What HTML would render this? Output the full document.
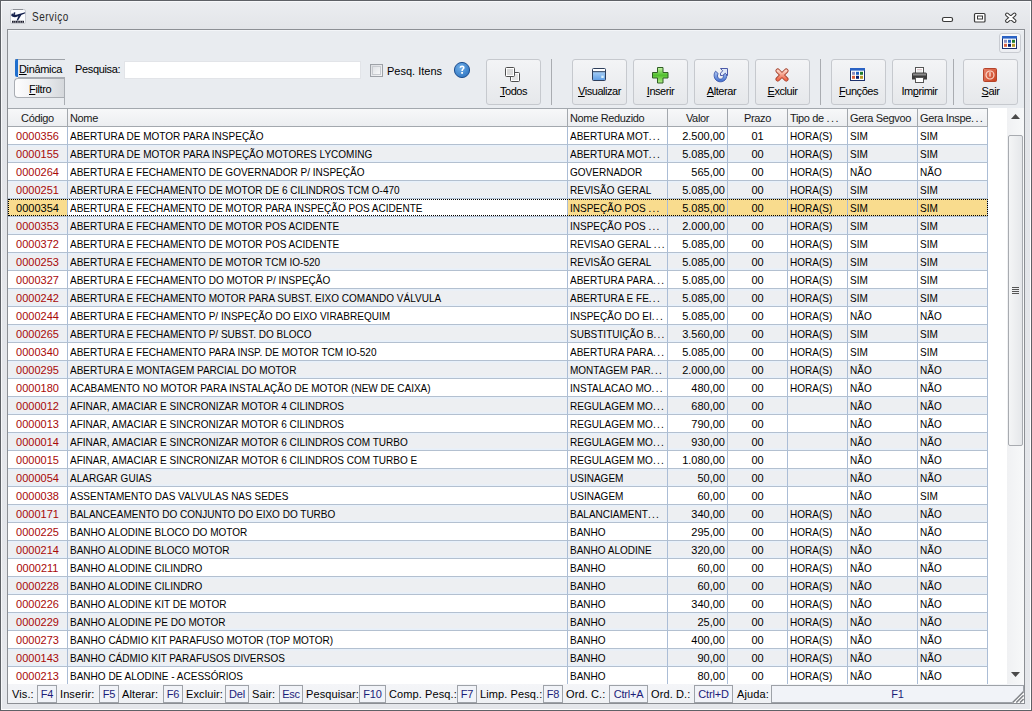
<!DOCTYPE html>
<html><head><meta charset="utf-8"><style>
*{box-sizing:border-box;margin:0;padding:0}
html,body{width:1032px;height:711px;overflow:hidden}
body{position:relative;background:linear-gradient(#eceef1 0,#e3e5e9 28px,#e5e7eb 100%);font-family:"Liberation Sans",sans-serif;font-size:11px;color:#000}
.abs{position:absolute}
#win{position:absolute;left:0;top:0;width:1032px;height:711px;border:1px solid #5e6166}
#title{position:absolute;left:32px;top:10px;font-size:12px;color:#2a2a2a;letter-spacing:0.6px;transform:scaleX(.83);transform-origin:0 0}
#panel{position:absolute;left:7px;top:29px;width:1018px;height:675px;border:1px solid #8c8f94;background:#e9ecf0}
.btn{position:absolute;top:59px;width:55px;height:46px;border:1px solid #c6c9ce;border-radius:3px;background:linear-gradient(#f3f4f6,#e6e8eb);}
.btn .lbl{position:absolute;left:0;right:0;top:25px;text-align:center;font-size:11px;letter-spacing:-0.45px}
.btn .ic{position:absolute}
.sep{position:absolute;top:59px;width:1px;height:46px;background:#a9acb1}
u{text-decoration:underline;text-underline-offset:1px;text-decoration-thickness:1px}
.ghead{position:absolute;left:0;top:108px;width:1032px;height:18px}
.hc{position:absolute;top:0;height:19px;border:1px solid #a3a8ae;border-left:none;background:linear-gradient(#f7f8f9,#eceef1);line-height:18px;padding:0 2px;white-space:nowrap;overflow:hidden;color:#1a1a1a}
.row{position:absolute;left:0;width:1032px;height:18px}
.cell{position:absolute;top:0;height:18px;border-right:1px solid #abbdd6;border-bottom:1px solid #b3c0d0;background:#fff;line-height:18px;padding:0 2px;white-space:nowrap;overflow:hidden}
.alt .cell{background:linear-gradient(#e7f0fa 0,#e7f0fa 1px,#edeff2 2px,#edeff2 15px,#e7f0fa 16px)}
.sel .cell{background:#f9dc8e}
.sel .cell.foc{background:#fff}
.cell.cod{color:#a80808}
.sel .cell.cod{color:#000}
.al{text-align:left}.ar{text-align:right}.ac{text-align:center}
.lbl2{font-size:11px;letter-spacing:-0.35px;color:#000;white-space:nowrap}
.st{position:absolute;top:688px;font-size:11px;letter-spacing:0.1px;color:#000;white-space:nowrap}
.fk{position:absolute;top:685px;height:18px;border:1px solid #9ea2a8;background:#f1f3f8;color:#1c1c78;text-align:center;line-height:16px;font-size:11px;letter-spacing:-0.2px}
.cell{line-height:19px}
.k0{letter-spacing:0}
.cell span{display:inline-block}
.k1 span,.k2 span,.k5 span,.k6 span,.k7 span{transform:scaleX(.91);transform-origin:0 0;word-spacing:0}
.k3{letter-spacing:0}
.k4{letter-spacing:0}
.hc{letter-spacing:-0.35px}
.selbox{position:absolute;left:8px;top:0;width:980px;height:17px;border:1px dotted #000}

.el{font-style:normal;letter-spacing:1.4px}

</style></head><body>
<div id="win"></div>
<div class="abs" style="left:1030px;top:1px;width:1px;height:709px;background:#fff"></div>
<div class="abs" style="left:1px;top:709px;width:1030px;height:1px;background:#fff"></div>
<div class="abs" style="left:1px;top:1px;width:1030px;height:1px;background:#f7f8fa"></div>
<div class="abs" style="left:1px;top:1px;width:1px;height:709px;background:#f7f8fa"></div>
<!-- app icon -->
<svg class="abs" style="left:9px;top:8px" width="18" height="17" viewBox="0 0 18 17">
<rect x="1.5" y="1.5" width="15" height="14" rx="1.5" fill="#fbfcfe" stroke="#c9ccd2"/>
<line x1="4" y1="1.5" x2="14" y2="1.5" stroke="#8e9197"/>
<path d="M2.2 7.6 C3.5 9.2 6 9.6 8.6 8.6 L15.8 5.6 C16.6 5.2 16.4 4.2 15.4 4.4 L8.2 6.4 C6.2 7 4.6 6.8 3.6 5.4 L2.6 5.8 Z" fill="#13204d"/>
<path d="M9.6 7.4 L12.6 6.6 L9 12.6 L7.6 12.6 Z" fill="#13204d"/>
<path d="M4 6.6 L5 4.2 L6.4 4.4 L5.8 7 Z" fill="#13204d"/>
<rect x="3" y="12.8" width="12" height="2" fill="#1c1c2c"/>
<g fill="#fbfcfe" opacity=".8"><rect x="4.6" y="12.8" width=".5" height="2"/><rect x="6.3" y="12.8" width=".5" height="2"/><rect x="8" y="12.8" width=".5" height="2"/><rect x="9.7" y="12.8" width=".5" height="2"/><rect x="11.4" y="12.8" width=".5" height="2"/><rect x="13.1" y="12.8" width=".5" height="2"/></g>
</svg>
<div id="title">Serviço</div>
<!-- window controls -->
<svg class="abs" style="left:938px;top:10px" width="84" height="16" viewBox="0 0 84 16">
<rect x="4.5" y="7.5" width="10" height="4" rx="1.5" fill="#fff" stroke="#3a3a3a" stroke-width="1.2"/>
<rect x="36.5" y="3.5" width="10.5" height="8.5" rx="1" fill="#fff" stroke="#3a3a3a" stroke-width="1.2"/>
<rect x="39.5" y="6" width="5" height="3" fill="#fff" stroke="#3a3a3a" stroke-width="1"/>
<path d="M69 4.5 L76.5 11 M76.5 4.5 L69 11" stroke="#3a3a3a" stroke-width="4" stroke-linecap="round"/>
<path d="M69 4.5 L76.5 11 M76.5 4.5 L69 11" stroke="#fff" stroke-width="1.8" stroke-linecap="round"/>
</svg>
<div id="panel"></div>
<div class="abs" style="left:8px;top:30px;width:1016px;height:1px;background:#f3f5f8"></div>
<!-- grid button top right -->
<div class="abs" style="left:999px;top:33px;width:22px;height:20px;border:1px solid #c9ccd2;border-radius:3px;background:linear-gradient(#f7f8fa,#eceef2)"></div>
<svg class="abs" style="left:1002px;top:36px" width="15" height="13" viewBox="0 0 15 13">
<rect x="0.5" y="0.5" width="14" height="12" fill="#fff" stroke="#1b2f6b"/>
<rect x="0" y="0" width="15" height="2.6" fill="#2a62c4"/>
<rect x="2" y="3.8" width="3" height="3" fill="#8c8fc0"/><rect x="6" y="3.8" width="3" height="3" fill="#1f5fc2"/><rect x="10" y="3.8" width="3" height="3" fill="#1f7a2e"/>
<rect x="2" y="7.8" width="3" height="3" fill="#d9603f"/><rect x="6" y="7.8" width="3" height="3" fill="#0b1e6e"/><rect x="10" y="7.8" width="3" height="3" fill="#b89a2a"/>
</svg>
<!-- tabs -->
<div class="abs" style="left:15px;top:59px;width:50px;height:1px;background:#9fa3a9"></div>
<div class="abs" style="left:15px;top:59px;width:3px;height:18px;background:#1f6fce;border-radius:2px 0 0 2px"></div>
<div class="abs" style="left:18px;top:77px;width:47px;height:1px;background:#a9adb3"></div>
<div class="abs lbl2" style="left:19px;top:63px"><u>D</u>inâmica</div>
<div class="abs" style="left:14px;top:78px;width:51px;height:20px;border:1px solid #a9adb3;border-right:none;border-radius:4px 0 0 4px;background:linear-gradient(90deg,#fdfdfe,#e8eaed 60%,#d4d7db)"></div>
<div class="abs lbl2" style="left:29px;top:83px"><u>F</u>iltro</div>
<div class="abs" style="left:64px;top:78px;width:1px;height:27px;background:#a9adb3"></div>
<!-- search -->
<div class="abs lbl2" style="left:75px;top:63px">Pesquisa:</div>
<div class="abs" style="left:124px;top:61px;width:237px;height:18px;background:#fff;border:1px solid #e2e4e8"></div>
<div class="abs" style="left:370px;top:64px;width:13px;height:13px;border:1px solid #9da1a7;background:linear-gradient(135deg,#dcdee2,#f4f5f7)"></div>
<div class="abs" style="left:372px;top:66px;width:9px;height:9px;border:1px solid #c8cbd0;background:linear-gradient(135deg,#e0e2e6,#f7f8f9)"></div>
<div class="abs lbl2" style="left:387px;top:65px;letter-spacing:0">Pesq. Itens</div>
<svg class="abs" style="left:453px;top:61px" width="18" height="18" viewBox="0 0 18 18">
<defs><radialGradient id="hg" cx="40%" cy="35%" r="70%"><stop offset="0" stop-color="#6fb0ea"/><stop offset="1" stop-color="#2f74c0"/></radialGradient></defs>
<circle cx="9" cy="9" r="7.6" fill="url(#hg)" stroke="#1f4f8f" stroke-width="1"/>
<path d="M6.6 6.8 C6.6 5.3 7.7 4.6 9.1 4.6 C10.6 4.6 11.6 5.4 11.6 6.7 C11.6 8.2 9.9 8.4 9.9 10 L8.3 10 C8.3 7.9 9.9 7.7 9.9 6.8 C9.9 6.2 9.6 5.9 9.1 5.9 C8.5 5.9 8.2 6.3 8.2 6.8 Z" fill="#fff"/>
<rect x="8.2" y="11" width="1.8" height="1.8" fill="#fff"/>
</svg>
<!-- toolbar buttons -->
<div class="btn" style="left:486px"><div class="lbl"><u>T</u>odos</div>
<svg class="ic" style="left:18px;top:7px" width="16" height="16" viewBox="0 0 16 16">
<rect x="5.5" y="5.5" width="9" height="9" rx="1" fill="#fff" stroke="#4e4e4e"/><rect x="7" y="7" width="6" height="6" fill="#e3e3e3"/>
<rect x="0.5" y="0.5" width="9" height="9" rx="1" fill="#fff" stroke="#4e4e4e"/><rect x="2" y="2" width="6" height="6" fill="#d9d9d9"/>
</svg></div>
<div class="sep" style="left:551px"></div>
<div class="btn" style="left:572px"><div class="lbl"><u>V</u>isualizar</div>
<svg class="ic" style="left:19px;top:8px" width="14" height="13" viewBox="0 0 14 13">
<defs><linearGradient id="vg" x1="0" y1="0" x2="0" y2="1"><stop offset="0" stop-color="#bfe0fc"/><stop offset="1" stop-color="#5f9de4"/></linearGradient></defs>
<rect x="0.5" y="0.5" width="13" height="12" rx="1" fill="url(#vg)" stroke="#2e3f5c"/>
<rect x="1" y="1" width="12" height="2.4" fill="#fff"/><line x1="0.5" y1="3.7" x2="13.5" y2="3.7" stroke="#2e3f5c"/>
<rect x="9.3" y="7.6" width="2.4" height="2.4" fill="#d8f2ff"/>
</svg></div>
<div class="btn" style="left:633px"><div class="lbl"><u>I</u>nserir</div>
<svg class="ic" style="left:18px;top:7px" width="17" height="17" viewBox="0 0 17 17">
<defs><linearGradient id="ig" x1="0" y1="0" x2="0" y2="1"><stop offset="0" stop-color="#c8f5a8"/><stop offset=".5" stop-color="#4fbf2c"/><stop offset="1" stop-color="#b6ee8c"/></linearGradient></defs>
<path d="M5.5 0.5 H11 V5.5 H16 V11 H11 V16 H5.5 V11 H0.5 V5.5 H5.5 Z" fill="url(#ig)" stroke="#2f5e24" stroke-linejoin="round"/>
</svg></div>
<div class="btn" style="left:694px"><div class="lbl"><u>A</u>lterar</div>
<svg class="ic" style="left:18px;top:8px" width="16" height="16" viewBox="0 0 16 16">
<defs><linearGradient id="ag" x1="0" y1="0" x2="0" y2="1"><stop offset="0" stop-color="#b4ccf2"/><stop offset="1" stop-color="#3d6cd0"/></linearGradient></defs>
<path d="M2.6 3.2 C0.6 5.4 0.6 9.6 3 12 C5.4 14.4 9.6 14.4 12 12 C14 10 14.2 6.8 12.8 4.6 L10 6.2 C10.8 7.6 10.6 9.2 9.6 10.2 C8.4 11.4 6.6 11.4 5.4 10.2 C4.2 9 4.2 7 5.2 5.6 Z" fill="url(#ag)" stroke="#3a55a8" stroke-width=".9" stroke-linejoin="round"/>
<path d="M7.5 0.5 L14.5 0.5 L14.5 7.5 L12.3 5.3 L9.7 7.5 L7.5 7.5 L7.5 5.2 L9.7 2.8 Z" fill="#dfe8f8" stroke="#3a4aa0" stroke-width=".9" stroke-linejoin="round"/>
</svg></div>
<div class="btn" style="left:755px"><div class="lbl"><u>E</u>xcluir</div>
<svg class="ic" style="left:19px;top:8px" width="14" height="14" viewBox="0 0 14 14">
<defs><linearGradient id="xg" x1="0" y1="0" x2="0" y2="1"><stop offset="0" stop-color="#fdd3c4"/><stop offset="1" stop-color="#ef6b4e"/></linearGradient></defs>
<path d="M2.8 2.8 L11.2 11.2 M11.2 2.8 L2.8 11.2" stroke="#a5402b" stroke-width="4.6" stroke-linecap="round"/>
<path d="M2.8 2.8 L11.2 11.2 M11.2 2.8 L2.8 11.2" stroke="url(#xg)" stroke-width="2.9" stroke-linecap="round"/>
</svg></div>
<div class="sep" style="left:820px"></div>
<div class="btn" style="left:831px"><div class="lbl"><u>F</u>unções</div>
<svg class="ic" style="left:18px;top:8px" width="15" height="13" viewBox="0 0 15 13">
<rect x="0.5" y="0.5" width="14" height="12" fill="#fff" stroke="#1b2f6b"/>
<rect x="0" y="0" width="15" height="2.6" fill="#2a62c4"/>
<rect x="2" y="3.8" width="3" height="3" fill="#8c8fc0"/><rect x="6" y="3.8" width="3" height="3" fill="#1f5fc2"/><rect x="10" y="3.8" width="3" height="3" fill="#1f7a2e"/>
<rect x="2" y="7.8" width="3" height="3" fill="#d9603f"/><rect x="6" y="7.8" width="3" height="3" fill="#0b1e6e"/><rect x="10" y="7.8" width="3" height="3" fill="#b89a2a"/>
</svg></div>
<div class="btn" style="left:892px"><div class="lbl">Im<u>p</u>rimir</div>
<svg class="ic" style="left:18px;top:7px" width="17" height="16" viewBox="0 0 17 16">
<rect x="4.5" y="0.5" width="8" height="6" fill="#fff" stroke="#555"/>
<line x1="6" y1="2.5" x2="11" y2="2.5" stroke="#c9a0a8" stroke-width=".6"/><line x1="6" y1="4" x2="11" y2="4" stroke="#bbb" stroke-width=".6"/>
<path d="M1 7 Q1 5.5 2.5 5.5 H14.5 Q16 5.5 16 7 V12.5 H1 Z" fill="#3c3c3c"/>
<rect x="2" y="6.5" width="13" height="2" fill="#8a8a8a"/>
<rect x="4.5" y="10.5" width="8" height="5" fill="#fff" stroke="#555"/>
</svg></div>
<div class="sep" style="left:953px"></div>
<div class="btn" style="left:963px"><div class="lbl"><u>S</u>air</div>
<svg class="ic" style="left:19px;top:8px" width="14" height="14" viewBox="0 0 14 14">
<defs><linearGradient id="sg" x1="0" y1="0" x2="1" y2="1"><stop offset="0" stop-color="#e8826a"/><stop offset="1" stop-color="#c8401e"/></linearGradient></defs>
<rect x="0.5" y="0.5" width="13" height="13" rx="1" fill="url(#sg)" stroke="#b4432a"/>
<circle cx="7" cy="7" r="4" fill="none" stroke="#fbd6c8" stroke-width="1.2"/>
<rect x="6.3" y="4.2" width="1.4" height="4.4" fill="#fbd6c8"/>
</svg></div>
<!-- grid area -->
<div class="abs" style="left:8px;top:108px;width:999px;height:577px;background:#fff"></div>
<div class="ghead">
<div class="hc ac" style="left:8px;width:60px">Código</div>
<div class="hc al" style="left:68px;width:500px">Nome</div>
<div class="hc al" style="left:568px;width:100px">Nome Reduzido</div>
<div class="hc ac" style="left:668px;width:60px">Valor</div>
<div class="hc ac" style="left:728px;width:60px">Prazo</div>
<div class="hc al" style="left:788px;width:60px">Tipo de <i class="el">...</i></div>
<div class="hc al" style="left:848px;width:70px">Gera Segvoo</div>
<div class="hc al" style="left:918px;width:70px">Gera Inspe<i class="el">...</i></div>
</div>
<div class="row" style="top:127px">
<div class="cell k0 ac cod" style="left:8px;width:60px"><span>0000356</span></div>
<div class="cell k1 al" style="left:68px;width:500px"><span>ABERTURA DE MOTOR PARA INSPEÇÃO</span></div>
<div class="cell k2 al" style="left:568px;width:100px"><span>ABERTURA MOT<i class="el">...</i></span></div>
<div class="cell k3 ar" style="left:668px;width:60px"><span>2.500,00</span></div>
<div class="cell k4 ac" style="left:728px;width:60px"><span>01</span></div>
<div class="cell k5 al" style="left:788px;width:60px"><span>HORA(S)</span></div>
<div class="cell k6 al" style="left:848px;width:70px"><span>SIM</span></div>
<div class="cell k7 al" style="left:918px;width:70px"><span>SIM</span></div>
</div>
<div class="row alt" style="top:145px">
<div class="cell k0 ac cod" style="left:8px;width:60px"><span>0000155</span></div>
<div class="cell k1 al" style="left:68px;width:500px"><span>ABERTURA DE MOTOR PARA INSPEÇÃO MOTORES LYCOMING</span></div>
<div class="cell k2 al" style="left:568px;width:100px"><span>ABERTURA MOT<i class="el">...</i></span></div>
<div class="cell k3 ar" style="left:668px;width:60px"><span>5.085,00</span></div>
<div class="cell k4 ac" style="left:728px;width:60px"><span>00</span></div>
<div class="cell k5 al" style="left:788px;width:60px"><span>HORA(S)</span></div>
<div class="cell k6 al" style="left:848px;width:70px"><span>SIM</span></div>
<div class="cell k7 al" style="left:918px;width:70px"><span>SIM</span></div>
</div>
<div class="row" style="top:163px">
<div class="cell k0 ac cod" style="left:8px;width:60px"><span>0000264</span></div>
<div class="cell k1 al" style="left:68px;width:500px"><span>ABERTURA E FECHAMENTO DE GOVERNADOR P/ INSPEÇÃO</span></div>
<div class="cell k2 al" style="left:568px;width:100px"><span>GOVERNADOR</span></div>
<div class="cell k3 ar" style="left:668px;width:60px"><span>565,00</span></div>
<div class="cell k4 ac" style="left:728px;width:60px"><span>00</span></div>
<div class="cell k5 al" style="left:788px;width:60px"><span>HORA(S)</span></div>
<div class="cell k6 al" style="left:848px;width:70px"><span>NÃO</span></div>
<div class="cell k7 al" style="left:918px;width:70px"><span>NÃO</span></div>
</div>
<div class="row alt" style="top:181px">
<div class="cell k0 ac cod" style="left:8px;width:60px"><span>0000251</span></div>
<div class="cell k1 al" style="left:68px;width:500px"><span>ABERTURA E FECHAMENTO DE MOTOR DE 6 CILINDROS TCM O-470</span></div>
<div class="cell k2 al" style="left:568px;width:100px"><span>REVISÃO GERAL</span></div>
<div class="cell k3 ar" style="left:668px;width:60px"><span>5.085,00</span></div>
<div class="cell k4 ac" style="left:728px;width:60px"><span>00</span></div>
<div class="cell k5 al" style="left:788px;width:60px"><span>HORA(S)</span></div>
<div class="cell k6 al" style="left:848px;width:70px"><span>SIM</span></div>
<div class="cell k7 al" style="left:918px;width:70px"><span>SIM</span></div>
</div>
<div class="row sel" style="top:199px">
<div class="cell k0 ac cod" style="left:8px;width:60px"><span>0000354</span></div>
<div class="cell k1 al foc" style="left:68px;width:500px"><span>ABERTURA E FECHAMENTO DE MOTOR PARA INSPEÇÃO POS ACIDENTE</span></div>
<div class="cell k2 al" style="left:568px;width:100px"><span>INSPEÇÃO POS <i class="el">...</i></span></div>
<div class="cell k3 ar" style="left:668px;width:60px"><span>5.085,00</span></div>
<div class="cell k4 ac" style="left:728px;width:60px"><span>00</span></div>
<div class="cell k5 al" style="left:788px;width:60px"><span>HORA(S)</span></div>
<div class="cell k6 al" style="left:848px;width:70px"><span>SIM</span></div>
<div class="cell k7 al" style="left:918px;width:70px"><span>SIM</span></div>
<div class="selbox"></div>
</div>
<div class="row alt" style="top:217px">
<div class="cell k0 ac cod" style="left:8px;width:60px"><span>0000353</span></div>
<div class="cell k1 al" style="left:68px;width:500px"><span>ABERTURA E FECHAMENTO DE MOTOR POS ACIDENTE</span></div>
<div class="cell k2 al" style="left:568px;width:100px"><span>INSPEÇÃO POS <i class="el">...</i></span></div>
<div class="cell k3 ar" style="left:668px;width:60px"><span>2.000,00</span></div>
<div class="cell k4 ac" style="left:728px;width:60px"><span>00</span></div>
<div class="cell k5 al" style="left:788px;width:60px"><span>HORA(S)</span></div>
<div class="cell k6 al" style="left:848px;width:70px"><span>SIM</span></div>
<div class="cell k7 al" style="left:918px;width:70px"><span>SIM</span></div>
</div>
<div class="row" style="top:235px">
<div class="cell k0 ac cod" style="left:8px;width:60px"><span>0000372</span></div>
<div class="cell k1 al" style="left:68px;width:500px"><span>ABERTURA E FECHAMENTO DE MOTOR POS ACIDENTE</span></div>
<div class="cell k2 al" style="left:568px;width:100px"><span>REVISAO GERAL <i class="el">...</i></span></div>
<div class="cell k3 ar" style="left:668px;width:60px"><span>5.085,00</span></div>
<div class="cell k4 ac" style="left:728px;width:60px"><span>00</span></div>
<div class="cell k5 al" style="left:788px;width:60px"><span>HORA(S)</span></div>
<div class="cell k6 al" style="left:848px;width:70px"><span>SIM</span></div>
<div class="cell k7 al" style="left:918px;width:70px"><span>SIM</span></div>
</div>
<div class="row alt" style="top:253px">
<div class="cell k0 ac cod" style="left:8px;width:60px"><span>0000253</span></div>
<div class="cell k1 al" style="left:68px;width:500px"><span>ABERTURA E FECHAMENTO DE MOTOR TCM IO-520</span></div>
<div class="cell k2 al" style="left:568px;width:100px"><span>REVISÃO GERAL</span></div>
<div class="cell k3 ar" style="left:668px;width:60px"><span>5.085,00</span></div>
<div class="cell k4 ac" style="left:728px;width:60px"><span>00</span></div>
<div class="cell k5 al" style="left:788px;width:60px"><span>HORA(S)</span></div>
<div class="cell k6 al" style="left:848px;width:70px"><span>SIM</span></div>
<div class="cell k7 al" style="left:918px;width:70px"><span>SIM</span></div>
</div>
<div class="row" style="top:271px">
<div class="cell k0 ac cod" style="left:8px;width:60px"><span>0000327</span></div>
<div class="cell k1 al" style="left:68px;width:500px"><span>ABERTURA E FECHAMENTO DO MOTOR P/ INSPEÇÃO</span></div>
<div class="cell k2 al" style="left:568px;width:100px"><span>ABERTURA PARA<i class="el">...</i></span></div>
<div class="cell k3 ar" style="left:668px;width:60px"><span>5.085,00</span></div>
<div class="cell k4 ac" style="left:728px;width:60px"><span>00</span></div>
<div class="cell k5 al" style="left:788px;width:60px"><span>HORA(S)</span></div>
<div class="cell k6 al" style="left:848px;width:70px"><span>SIM</span></div>
<div class="cell k7 al" style="left:918px;width:70px"><span>SIM</span></div>
</div>
<div class="row alt" style="top:289px">
<div class="cell k0 ac cod" style="left:8px;width:60px"><span>0000242</span></div>
<div class="cell k1 al" style="left:68px;width:500px"><span>ABERTURA E FECHAMENTO MOTOR PARA SUBST. EIXO COMANDO VÁLVULA</span></div>
<div class="cell k2 al" style="left:568px;width:100px"><span>ABERTURA E FE<i class="el">...</i></span></div>
<div class="cell k3 ar" style="left:668px;width:60px"><span>5.085,00</span></div>
<div class="cell k4 ac" style="left:728px;width:60px"><span>00</span></div>
<div class="cell k5 al" style="left:788px;width:60px"><span>HORA(S)</span></div>
<div class="cell k6 al" style="left:848px;width:70px"><span>SIM</span></div>
<div class="cell k7 al" style="left:918px;width:70px"><span>SIM</span></div>
</div>
<div class="row" style="top:307px">
<div class="cell k0 ac cod" style="left:8px;width:60px"><span>0000244</span></div>
<div class="cell k1 al" style="left:68px;width:500px"><span>ABERTURA E FECHAMENTO P/ INSPEÇÃO DO EIXO VIRABREQUIM</span></div>
<div class="cell k2 al" style="left:568px;width:100px"><span>INSPEÇÃO DO EI<i class="el">...</i></span></div>
<div class="cell k3 ar" style="left:668px;width:60px"><span>5.085,00</span></div>
<div class="cell k4 ac" style="left:728px;width:60px"><span>00</span></div>
<div class="cell k5 al" style="left:788px;width:60px"><span>HORA(S)</span></div>
<div class="cell k6 al" style="left:848px;width:70px"><span>NÃO</span></div>
<div class="cell k7 al" style="left:918px;width:70px"><span>NÃO</span></div>
</div>
<div class="row alt" style="top:325px">
<div class="cell k0 ac cod" style="left:8px;width:60px"><span>0000265</span></div>
<div class="cell k1 al" style="left:68px;width:500px"><span>ABERTURA E FECHAMENTO P/ SUBST. DO BLOCO</span></div>
<div class="cell k2 al" style="left:568px;width:100px"><span>SUBSTITUIÇÃO B<i class="el">...</i></span></div>
<div class="cell k3 ar" style="left:668px;width:60px"><span>3.560,00</span></div>
<div class="cell k4 ac" style="left:728px;width:60px"><span>00</span></div>
<div class="cell k5 al" style="left:788px;width:60px"><span>HORA(S)</span></div>
<div class="cell k6 al" style="left:848px;width:70px"><span>SIM</span></div>
<div class="cell k7 al" style="left:918px;width:70px"><span>SIM</span></div>
</div>
<div class="row" style="top:343px">
<div class="cell k0 ac cod" style="left:8px;width:60px"><span>0000340</span></div>
<div class="cell k1 al" style="left:68px;width:500px"><span>ABERTURA E FECHAMENTO PARA INSP. DE MOTOR TCM IO-520</span></div>
<div class="cell k2 al" style="left:568px;width:100px"><span>ABERTURA PARA<i class="el">...</i></span></div>
<div class="cell k3 ar" style="left:668px;width:60px"><span>5.085,00</span></div>
<div class="cell k4 ac" style="left:728px;width:60px"><span>00</span></div>
<div class="cell k5 al" style="left:788px;width:60px"><span>HORA(S)</span></div>
<div class="cell k6 al" style="left:848px;width:70px"><span>SIM</span></div>
<div class="cell k7 al" style="left:918px;width:70px"><span>SIM</span></div>
</div>
<div class="row alt" style="top:361px">
<div class="cell k0 ac cod" style="left:8px;width:60px"><span>0000295</span></div>
<div class="cell k1 al" style="left:68px;width:500px"><span>ABERTURA E MONTAGEM PARCIAL DO MOTOR</span></div>
<div class="cell k2 al" style="left:568px;width:100px"><span>MONTAGEM PAR<i class="el">...</i></span></div>
<div class="cell k3 ar" style="left:668px;width:60px"><span>2.000,00</span></div>
<div class="cell k4 ac" style="left:728px;width:60px"><span>00</span></div>
<div class="cell k5 al" style="left:788px;width:60px"><span>HORA(S)</span></div>
<div class="cell k6 al" style="left:848px;width:70px"><span>NÃO</span></div>
<div class="cell k7 al" style="left:918px;width:70px"><span>NÃO</span></div>
</div>
<div class="row" style="top:379px">
<div class="cell k0 ac cod" style="left:8px;width:60px"><span>0000180</span></div>
<div class="cell k1 al" style="left:68px;width:500px"><span>ACABAMENTO NO MOTOR PARA INSTALAÇÃO DE MOTOR (NEW DE CAIXA)</span></div>
<div class="cell k2 al" style="left:568px;width:100px"><span>INSTALACAO MO<i class="el">...</i></span></div>
<div class="cell k3 ar" style="left:668px;width:60px"><span>480,00</span></div>
<div class="cell k4 ac" style="left:728px;width:60px"><span>00</span></div>
<div class="cell k5 al" style="left:788px;width:60px"><span>HORA(S)</span></div>
<div class="cell k6 al" style="left:848px;width:70px"><span>NÃO</span></div>
<div class="cell k7 al" style="left:918px;width:70px"><span>NÃO</span></div>
</div>
<div class="row alt" style="top:397px">
<div class="cell k0 ac cod" style="left:8px;width:60px"><span>0000012</span></div>
<div class="cell k1 al" style="left:68px;width:500px"><span>AFINAR, AMACIAR E SINCRONIZAR MOTOR 4 CILINDROS</span></div>
<div class="cell k2 al" style="left:568px;width:100px"><span>REGULAGEM MO<i class="el">...</i></span></div>
<div class="cell k3 ar" style="left:668px;width:60px"><span>680,00</span></div>
<div class="cell k4 ac" style="left:728px;width:60px"><span>00</span></div>
<div class="cell k5 al" style="left:788px;width:60px"><span></span></div>
<div class="cell k6 al" style="left:848px;width:70px"><span>NÃO</span></div>
<div class="cell k7 al" style="left:918px;width:70px"><span>NÃO</span></div>
</div>
<div class="row" style="top:415px">
<div class="cell k0 ac cod" style="left:8px;width:60px"><span>0000013</span></div>
<div class="cell k1 al" style="left:68px;width:500px"><span>AFINAR, AMACIAR E SINCRONIZAR MOTOR 6 CILINDROS</span></div>
<div class="cell k2 al" style="left:568px;width:100px"><span>REGULAGEM MO<i class="el">...</i></span></div>
<div class="cell k3 ar" style="left:668px;width:60px"><span>790,00</span></div>
<div class="cell k4 ac" style="left:728px;width:60px"><span>00</span></div>
<div class="cell k5 al" style="left:788px;width:60px"><span></span></div>
<div class="cell k6 al" style="left:848px;width:70px"><span>NÃO</span></div>
<div class="cell k7 al" style="left:918px;width:70px"><span>NÃO</span></div>
</div>
<div class="row alt" style="top:433px">
<div class="cell k0 ac cod" style="left:8px;width:60px"><span>0000014</span></div>
<div class="cell k1 al" style="left:68px;width:500px"><span>AFINAR, AMACIAR E SINCRONIZAR MOTOR 6 CILINDROS COM TURBO</span></div>
<div class="cell k2 al" style="left:568px;width:100px"><span>REGULAGEM MO<i class="el">...</i></span></div>
<div class="cell k3 ar" style="left:668px;width:60px"><span>930,00</span></div>
<div class="cell k4 ac" style="left:728px;width:60px"><span>00</span></div>
<div class="cell k5 al" style="left:788px;width:60px"><span></span></div>
<div class="cell k6 al" style="left:848px;width:70px"><span>NÃO</span></div>
<div class="cell k7 al" style="left:918px;width:70px"><span>NÃO</span></div>
</div>
<div class="row" style="top:451px">
<div class="cell k0 ac cod" style="left:8px;width:60px"><span>0000015</span></div>
<div class="cell k1 al" style="left:68px;width:500px"><span>AFINAR, AMACIAR E SINCRONIZAR MOTOR 6 CILINDROS COM TURBO E</span></div>
<div class="cell k2 al" style="left:568px;width:100px"><span>REGULAGEM MO<i class="el">...</i></span></div>
<div class="cell k3 ar" style="left:668px;width:60px"><span>1.080,00</span></div>
<div class="cell k4 ac" style="left:728px;width:60px"><span>00</span></div>
<div class="cell k5 al" style="left:788px;width:60px"><span></span></div>
<div class="cell k6 al" style="left:848px;width:70px"><span>NÃO</span></div>
<div class="cell k7 al" style="left:918px;width:70px"><span>NÃO</span></div>
</div>
<div class="row alt" style="top:469px">
<div class="cell k0 ac cod" style="left:8px;width:60px"><span>0000054</span></div>
<div class="cell k1 al" style="left:68px;width:500px"><span>ALARGAR GUIAS</span></div>
<div class="cell k2 al" style="left:568px;width:100px"><span>USINAGEM</span></div>
<div class="cell k3 ar" style="left:668px;width:60px"><span>50,00</span></div>
<div class="cell k4 ac" style="left:728px;width:60px"><span>00</span></div>
<div class="cell k5 al" style="left:788px;width:60px"><span></span></div>
<div class="cell k6 al" style="left:848px;width:70px"><span>NÃO</span></div>
<div class="cell k7 al" style="left:918px;width:70px"><span>NÃO</span></div>
</div>
<div class="row" style="top:487px">
<div class="cell k0 ac cod" style="left:8px;width:60px"><span>0000038</span></div>
<div class="cell k1 al" style="left:68px;width:500px"><span>ASSENTAMENTO DAS VALVULAS NAS SEDES</span></div>
<div class="cell k2 al" style="left:568px;width:100px"><span>USINAGEM</span></div>
<div class="cell k3 ar" style="left:668px;width:60px"><span>60,00</span></div>
<div class="cell k4 ac" style="left:728px;width:60px"><span>00</span></div>
<div class="cell k5 al" style="left:788px;width:60px"><span></span></div>
<div class="cell k6 al" style="left:848px;width:70px"><span>NÃO</span></div>
<div class="cell k7 al" style="left:918px;width:70px"><span>SIM</span></div>
</div>
<div class="row alt" style="top:505px">
<div class="cell k0 ac cod" style="left:8px;width:60px"><span>0000171</span></div>
<div class="cell k1 al" style="left:68px;width:500px"><span>BALANCEAMENTO DO CONJUNTO DO EIXO DO TURBO</span></div>
<div class="cell k2 al" style="left:568px;width:100px"><span>BALANCIAMENT<i class="el">...</i></span></div>
<div class="cell k3 ar" style="left:668px;width:60px"><span>340,00</span></div>
<div class="cell k4 ac" style="left:728px;width:60px"><span>00</span></div>
<div class="cell k5 al" style="left:788px;width:60px"><span>HORA(S)</span></div>
<div class="cell k6 al" style="left:848px;width:70px"><span>NÃO</span></div>
<div class="cell k7 al" style="left:918px;width:70px"><span>NÃO</span></div>
</div>
<div class="row" style="top:523px">
<div class="cell k0 ac cod" style="left:8px;width:60px"><span>0000225</span></div>
<div class="cell k1 al" style="left:68px;width:500px"><span>BANHO ALODINE BLOCO DO MOTOR</span></div>
<div class="cell k2 al" style="left:568px;width:100px"><span>BANHO</span></div>
<div class="cell k3 ar" style="left:668px;width:60px"><span>295,00</span></div>
<div class="cell k4 ac" style="left:728px;width:60px"><span>00</span></div>
<div class="cell k5 al" style="left:788px;width:60px"><span>HORA(S)</span></div>
<div class="cell k6 al" style="left:848px;width:70px"><span>NÃO</span></div>
<div class="cell k7 al" style="left:918px;width:70px"><span>NÃO</span></div>
</div>
<div class="row alt" style="top:541px">
<div class="cell k0 ac cod" style="left:8px;width:60px"><span>0000214</span></div>
<div class="cell k1 al" style="left:68px;width:500px"><span>BANHO ALODINE BLOCO MOTOR</span></div>
<div class="cell k2 al" style="left:568px;width:100px"><span>BANHO ALODINE</span></div>
<div class="cell k3 ar" style="left:668px;width:60px"><span>320,00</span></div>
<div class="cell k4 ac" style="left:728px;width:60px"><span>00</span></div>
<div class="cell k5 al" style="left:788px;width:60px"><span>HORA(S)</span></div>
<div class="cell k6 al" style="left:848px;width:70px"><span>NÃO</span></div>
<div class="cell k7 al" style="left:918px;width:70px"><span>NÃO</span></div>
</div>
<div class="row" style="top:559px">
<div class="cell k0 ac cod" style="left:8px;width:60px"><span>0000211</span></div>
<div class="cell k1 al" style="left:68px;width:500px"><span>BANHO ALODINE CILINDRO</span></div>
<div class="cell k2 al" style="left:568px;width:100px"><span>BANHO</span></div>
<div class="cell k3 ar" style="left:668px;width:60px"><span>60,00</span></div>
<div class="cell k4 ac" style="left:728px;width:60px"><span>00</span></div>
<div class="cell k5 al" style="left:788px;width:60px"><span>HORA(S)</span></div>
<div class="cell k6 al" style="left:848px;width:70px"><span>NÃO</span></div>
<div class="cell k7 al" style="left:918px;width:70px"><span>NÃO</span></div>
</div>
<div class="row alt" style="top:577px">
<div class="cell k0 ac cod" style="left:8px;width:60px"><span>0000228</span></div>
<div class="cell k1 al" style="left:68px;width:500px"><span>BANHO ALODINE CILINDRO</span></div>
<div class="cell k2 al" style="left:568px;width:100px"><span>BANHO</span></div>
<div class="cell k3 ar" style="left:668px;width:60px"><span>60,00</span></div>
<div class="cell k4 ac" style="left:728px;width:60px"><span>00</span></div>
<div class="cell k5 al" style="left:788px;width:60px"><span>HORA(S)</span></div>
<div class="cell k6 al" style="left:848px;width:70px"><span>NÃO</span></div>
<div class="cell k7 al" style="left:918px;width:70px"><span>NÃO</span></div>
</div>
<div class="row" style="top:595px">
<div class="cell k0 ac cod" style="left:8px;width:60px"><span>0000226</span></div>
<div class="cell k1 al" style="left:68px;width:500px"><span>BANHO ALODINE KIT DE MOTOR</span></div>
<div class="cell k2 al" style="left:568px;width:100px"><span>BANHO</span></div>
<div class="cell k3 ar" style="left:668px;width:60px"><span>340,00</span></div>
<div class="cell k4 ac" style="left:728px;width:60px"><span>00</span></div>
<div class="cell k5 al" style="left:788px;width:60px"><span>HORA(S)</span></div>
<div class="cell k6 al" style="left:848px;width:70px"><span>NÃO</span></div>
<div class="cell k7 al" style="left:918px;width:70px"><span>NÃO</span></div>
</div>
<div class="row alt" style="top:613px">
<div class="cell k0 ac cod" style="left:8px;width:60px"><span>0000229</span></div>
<div class="cell k1 al" style="left:68px;width:500px"><span>BANHO ALODINE PE DO MOTOR</span></div>
<div class="cell k2 al" style="left:568px;width:100px"><span>BANHO</span></div>
<div class="cell k3 ar" style="left:668px;width:60px"><span>25,00</span></div>
<div class="cell k4 ac" style="left:728px;width:60px"><span>00</span></div>
<div class="cell k5 al" style="left:788px;width:60px"><span>HORA(S)</span></div>
<div class="cell k6 al" style="left:848px;width:70px"><span>NÃO</span></div>
<div class="cell k7 al" style="left:918px;width:70px"><span>NÃO</span></div>
</div>
<div class="row" style="top:631px">
<div class="cell k0 ac cod" style="left:8px;width:60px"><span>0000273</span></div>
<div class="cell k1 al" style="left:68px;width:500px"><span>BANHO CÁDMIO KIT PARAFUSO MOTOR (TOP MOTOR)</span></div>
<div class="cell k2 al" style="left:568px;width:100px"><span>BANHO</span></div>
<div class="cell k3 ar" style="left:668px;width:60px"><span>400,00</span></div>
<div class="cell k4 ac" style="left:728px;width:60px"><span>00</span></div>
<div class="cell k5 al" style="left:788px;width:60px"><span>HORA(S)</span></div>
<div class="cell k6 al" style="left:848px;width:70px"><span>NÃO</span></div>
<div class="cell k7 al" style="left:918px;width:70px"><span>NÃO</span></div>
</div>
<div class="row alt" style="top:649px">
<div class="cell k0 ac cod" style="left:8px;width:60px"><span>0000143</span></div>
<div class="cell k1 al" style="left:68px;width:500px"><span>BANHO CÁDMIO KIT PARAFUSOS DIVERSOS</span></div>
<div class="cell k2 al" style="left:568px;width:100px"><span>BANHO</span></div>
<div class="cell k3 ar" style="left:668px;width:60px"><span>90,00</span></div>
<div class="cell k4 ac" style="left:728px;width:60px"><span>00</span></div>
<div class="cell k5 al" style="left:788px;width:60px"><span>HORA(S)</span></div>
<div class="cell k6 al" style="left:848px;width:70px"><span>NÃO</span></div>
<div class="cell k7 al" style="left:918px;width:70px"><span>NÃO</span></div>
</div>
<div class="row" style="top:667px">
<div class="cell k0 ac cod" style="left:8px;width:60px"><span>0000213</span></div>
<div class="cell k1 al" style="left:68px;width:500px"><span>BANHO DE ALODINE - ACESSÓRIOS</span></div>
<div class="cell k2 al" style="left:568px;width:100px"><span>BANHO</span></div>
<div class="cell k3 ar" style="left:668px;width:60px"><span>80,00</span></div>
<div class="cell k4 ac" style="left:728px;width:60px"><span>00</span></div>
<div class="cell k5 al" style="left:788px;width:60px"><span>HORA(S)</span></div>
<div class="cell k6 al" style="left:848px;width:70px"><span>NÃO</span></div>
<div class="cell k7 al" style="left:918px;width:70px"><span>NÃO</span></div>
</div>
<div class="abs" style="left:7px;top:108px;width:1px;height:577px;background:#8c8f94"></div>
<!-- scrollbar -->
<div class="abs" style="left:1007px;top:108px;width:17px;height:577px;background:linear-gradient(90deg,#f0f1f3,#f7f8f9)"></div>
<svg class="abs" style="left:1011px;top:114px" width="9" height="5" viewBox="0 0 9 5"><path d="M0 5 L4.5 0 L9 5 Z" fill="#4a4a4a"/></svg>
<div class="abs" style="left:1008px;top:135px;width:15px;height:311px;border:1px solid #a8abb0;border-radius:2px;background:linear-gradient(90deg,#f4f5f6,#e5e7ea)"></div>
<div class="abs" style="left:1012px;top:287px;width:7px;height:8px;background:repeating-linear-gradient(#555 0 1px,transparent 1px 2px)"></div>
<svg class="abs" style="left:1011px;top:672px" width="9" height="5" viewBox="0 0 9 5"><path d="M0 0 L9 0 L4.5 5 Z" fill="#4a4a4a"/></svg>
<!-- status bar -->
<div class="abs" style="left:8px;top:684px;width:1016px;height:19px;background:linear-gradient(#f4f5f8,#eff1f4)"></div>
<div class="st" style="left:12px">Vis.:</div><div class="fk" style="left:37px;width:20px">F4</div>
<div class="st" style="left:60px">Inserir:</div><div class="fk" style="left:99px;width:20px">F5</div>
<div class="st" style="left:122px">Alterar:</div><div class="fk" style="left:163px;width:20px">F6</div>
<div class="st" style="left:186px">Excluir:</div><div class="fk" style="left:225px;width:24px">Del</div>
<div class="st" style="left:252px">Sair:</div><div class="fk" style="left:279px;width:24px">Esc</div>
<div class="st" style="left:306px">Pesquisar:</div><div class="fk" style="left:359px;width:27px">F10</div>
<div class="st" style="left:389px">Comp. Pesq.:</div><div class="fk" style="left:457px;width:20px">F7</div>
<div class="st" style="left:480px">Limp. Pesq.:</div><div class="fk" style="left:543px;width:20px">F8</div>
<div class="st" style="left:566px">Ord. C.:</div><div class="fk" style="left:609px;width:39px">Ctrl+A</div>
<div class="st" style="left:651px">Ord. D.:</div><div class="fk" style="left:694px;width:39px">Ctrl+D</div>
<div class="st" style="left:737px">Ajuda:</div><div class="fk" style="left:771px;width:253px">F1</div>
<svg class="abs" style="left:1008px;top:686px" width="16" height="17" viewBox="0 0 16 17">
<path d="M4 17 L16 5 L16 17 Z" fill="#fff"/>
<path d="M4.6 16.6 L15.6 5.6 M8.3 16.6 L15.6 9.3 M12 16.6 L15.6 13" stroke="#808388" stroke-width="1.5"/>
</svg>

</body></html>
